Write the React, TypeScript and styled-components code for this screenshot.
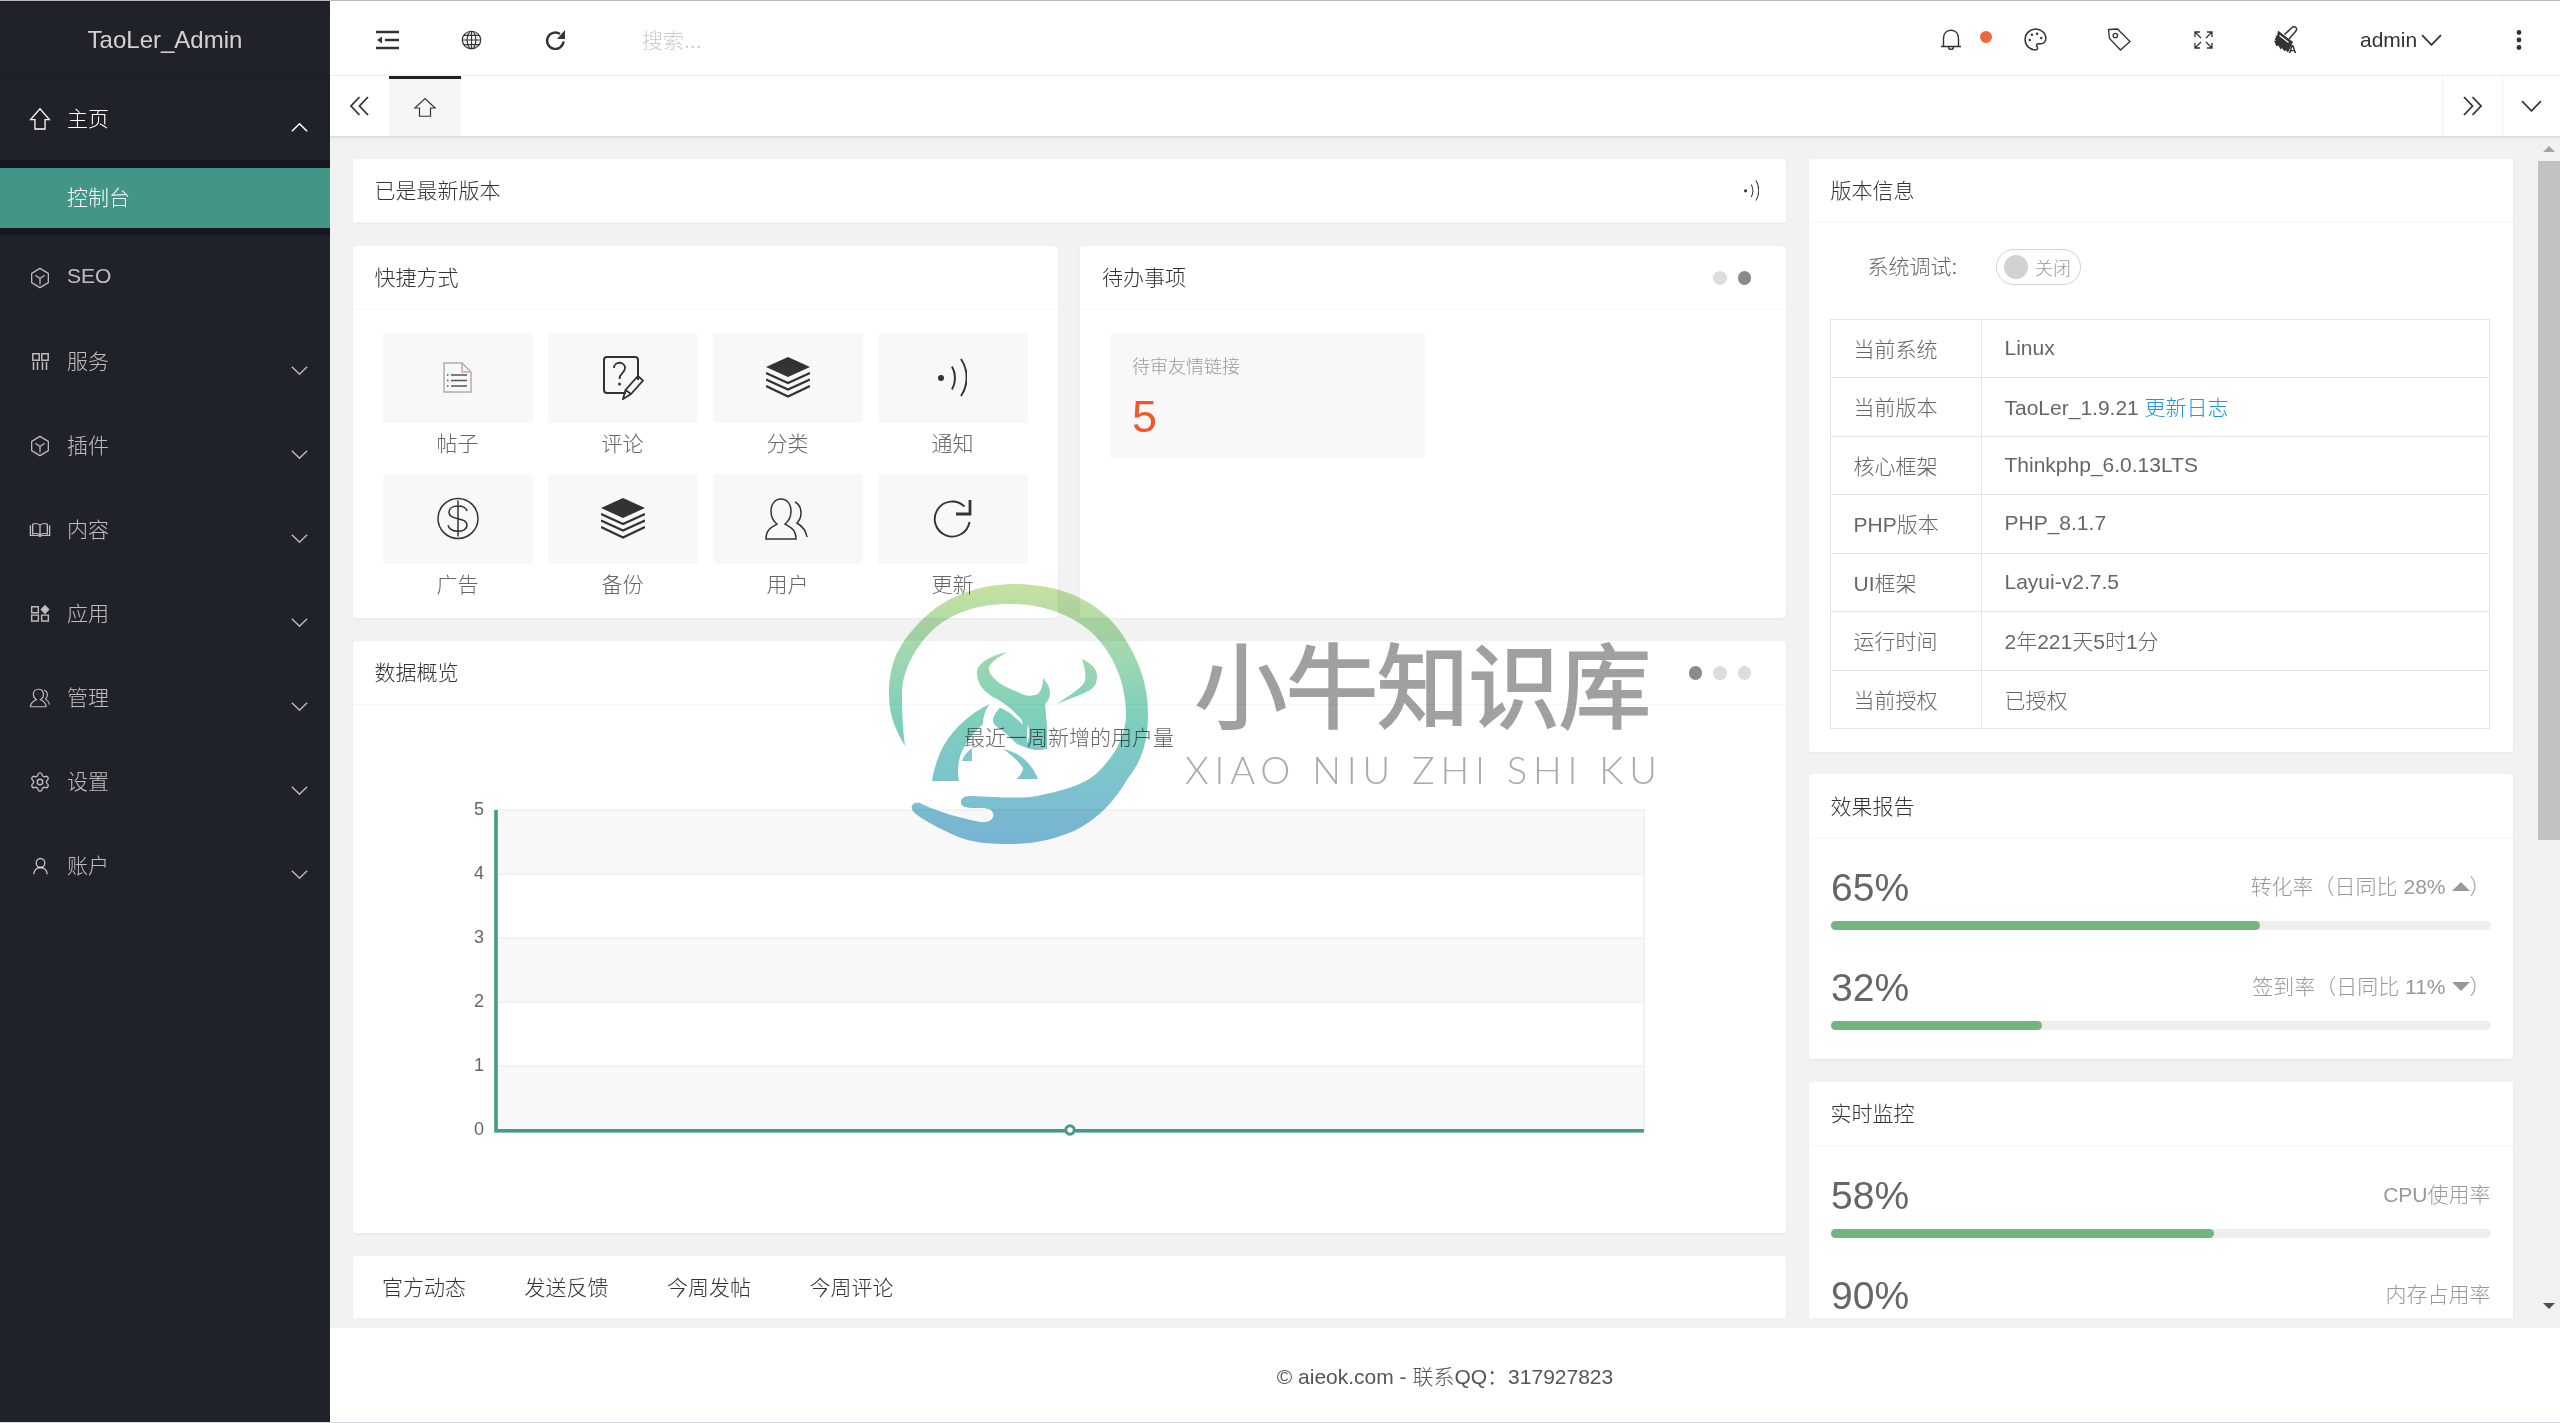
import React from "react";
import styled, { createGlobalStyle } from "styled-components";
import { Palette, Settings } from "lucide-react";

const Global = createGlobalStyle`
  html, body { margin: 0; padding: 0; height: 100%; overflow: hidden; background: #fff; }
  * { box-sizing: border-box; }
  #root { height: 100%; }
  body { font-family: "Liberation Sans", "Noto Sans CJK SC", sans-serif; font-size: 21px; font-weight: 300; color: #333; }
`;

const Page = styled.div`
  position: relative; display: flex; width: 2560px; height: 1423px; overflow: hidden;
  border-top: 1px solid #b9b9b9; border-bottom: 1px solid #cfdbe6;
`;

/* ---------- icons ---------- */
const Svg = styled.svg<{ $w: number; $h: number; $sw?: number }>`
  width: ${(p) => p.$w}px; height: ${(p) => p.$h}px; flex: none; display: block;
  fill: none; stroke: currentColor; stroke-width: ${(p) => p.$sw ?? 1.3};
`;
type IP = { w?: number; h?: number; sw?: number };
const I = (box: string, body: React.ReactNode, dw: number, dh: number, dsw?: number) =>
  ({ w = dw, h = dh, sw = dsw }: IP) => (
    <Svg viewBox={box} $w={w} $h={h} $sw={sw} preserveAspectRatio="none">{body}</Svg>
  );
const Fill = styled.path`fill: currentColor; stroke: none;`;
const Dot = styled.circle`fill: currentColor; stroke: none;`;

const HomeI = I("0 0 24 24", <path d="M12 1.800 1.800 12.600h4.700V22h11V12.600h4.700z" />, 22, 24, 1.4);
const CubeI = I("0 0 24 24", <><path d="M12 1.500 22 7v10l-10 5.500L2 17V7z" /><path d="M6.500 9 12 12.500 17.500 9M12 12.500V19" /></>, 20, 22, 1.5);
const AppI = I("0 0 17 17", <path d="M.8.800h6.400v6.400H.8zM9.800.800h6.400v6.400H9.800zM1.500 9v8M5.500 9v8M10.500 9v8M14.500 9v8" />, 17, 17, 1.5);
const BookI = I("0 0 24 24", <><path d="M1.500 6v14.500h8c1 0 2.500 1.500 2.500 1.500s1.500-1.500 2.500-1.500h8V6" /><path d="M4 18.500V4.500c3-1.500 6.500-1 8 1.500 1.500-2.500 5-3 8-1.500v14c-3-1.500-6.500-1-8 1.500-1.500-2.500-5-3-8-1.500zM12 6v13" /></>, 22, 17, 1.5);
const GridI = I("0 0 24 24", <><path d="M2 3.500h8v7.500H2zM2 14h8v7.500H2zM14 14h8v7.500h-8z" /><Fill d="M18 1l5.500 6-5.500 6-5.500-6z" /></>, 20, 19, 1.700);
const UsersI = I("0 0 24 24", <><path d="M1.500 22.500c0-5 3.500-7 6.500-8.500-2.200-1.500-3.200-3.800-3.200-6.300C4.800 4 7 1.500 10.300 1.500s5.500 2.500 5.500 6.200c0 2.500-1 4.800-3.200 6.300 3 1.500 6 3.500 6 8.500z" /><path d="M16.500 2.500c2.500 1.200 3.500 3.300 3.500 5.800 0 2-.8 3.700-2 4.700 2 1.500 4 4 4.500 7" /></>, 22, 20, 1.3);
const UserI = I("0 0 24 24", <><circle cx="12" cy="8" r="6" /><path d="M2.500 23c.5-5.500 4.500-9 9.500-9s9 3.500 9.500 9" /></>, 17, 18, 2);
const ChevD = I("0 0 20 11", <path d="M1 1l9 9 9-9" />, 17, 9, 1.700);
const ChevU = I("0 0 20 11", <path d="M1 10l9-9 9 9" />, 17, 9, 1.900);
const Dbl = ({ right }: { right?: boolean }) => (
  <Svg viewBox="0 0 21 20" $w={21} $h={20} $sw={1.8}>
    <path d={right ? "M2 1l8.500 9L2 19M10.500 1l8.500 9-8.500 9" : "M19 1l-8.500 9 8.500 9M10.500 1L2 10l8.500 9"} />
  </Svg>
);
const MenuI = I("0 0 23 20", <><path d="M0 2h23M9 10h14M0 18h23" /><Fill d="M1 10l5-3.500v7z" /></>, 23, 20, 2.400);
const GlobeI = I("0 0 24 24", <><circle cx="12" cy="12" r="10.500" /><ellipse cx="12" cy="12" rx="5" ry="10.500" /><path d="M12 1.500v21M1.500 12h21M3 6.500h18M3 17.500h18" /></>, 21, 20, 1.4);
const RefreshB = I("0 0 21 20", <><path d="M18.500 11.500a8.200 8.200 0 1 1-3.500-7.500" /><Fill d="M20 0v9h-8z" /></>, 21, 20, 2.500);
const BellI = I("0 0 22 21", <path d="M1 17.500h20M3.500 17.500v-8C3.500 4.500 6.500 1.200 11 1.200s7.500 3.300 7.500 8.300v8M8.500 18a2.500 2.500 0 0 0 5 0" />, 22, 21, 1.4);
const TagI = I("0 0 24 23", <><path d="M1.500 1.500l9-.5L23 13.500 13.500 22 2.500 10.500z" /><circle cx="8.300" cy="7.500" r="2.200" /></>, 24, 23, 1.3);
const FullI = I("0 0 19 18", <path d="M1 6V1h5M1 1l6 6M13 1h5v5M18 1l-6 6M1 12v5h5M1 17l6-6M13 17h5v-5M18 17l-6-6" />, 19, 18, 1.3);
const BrushText = styled.text`
  font-family: "Liberation Sans", sans-serif; font-size: 11px; font-weight: 700; fill: currentColor; stroke: none;
`;
const BrushI = () => (
  <Svg viewBox="0 0 40 40" $w={40} $h={40} $sw={1.500}>
    <Fill d="M11 10.500 26 22l-5 10.500-2.500-2.500-1 1.500-2.500-3.500-1.500 1.500-2-4-2 1L7 20.500l2 .5-1.500-2.500 1.500-.5-.5-2.500 1.500.5z" />
    <path d="M12.500 15.500l9 7" stroke="#fff" strokeWidth="1.200" />
    <path d="M17.500 14.500 25 7.500c1-1 3.500-1 4.300.5.800 1.500.2 2.500-.8 3.500L22 19" />
    <BrushText x="21.500" y="32.500">A</BrushText>
  </Svg>
);
const Kebab = () => (
  <Svg viewBox="0 0 6 20" $w={6} $h={20}>
    <Dot cx="3" cy="2.500" r="2.400" /><Dot cx="3" cy="10" r="2.400" /><Dot cx="3" cy="17.500" r="2.400" />
  </Svg>
);
const NoticeI = ({ w = 29, h = 39 }: IP) => (
  <Svg viewBox="0 0 29 39" $w={w} $h={h} $sw={2} preserveAspectRatio="none">
    <Dot cx="3" cy="20" r="3" /><path d="M14 8.500c4 7 4 16 0 23M23 1c7.500 11 7.500 26 0 37" />
  </Svg>
);
const DocI = I("0 0 29 31", <><path d="M1 1h18l9 9v20H1z" stroke="#aaa" /><path d="M19 1v9h9" stroke="#d8a08a" /><path d="M8 13h16M8 18.500h16M8 24h16M4 13h1.500M4 18.500h1.500M4 24h1.500" stroke="#555" /></>, 29, 31, 1.4);
const HelpI = I("0 0 42 44", <><path d="M24 37H5a3 3 0 0 1-3-3V4a3 3 0 0 1 3-3h28a3 3 0 0 1 3 3v20" strokeWidth="2" /><path d="M12 12c0-7 11-7 11 0 0 5-5.500 5-5.500 11" strokeWidth="1.800" /><Dot cx="17.500" cy="28" r="1.500" /><path d="M21 43l2.500-9L36 20l5 4.500L29 38zM23.500 34l5.500 4" strokeWidth="1.800" /></>, 42, 44, 2);
const LayersI = I("0 0 44 41", <><Fill d="M22 0l22 10-22 10L0 10z" /><path d="M0 16l22 10 22-10M0 22.500l22 10 22-10M0 29l22 10.500L44 29" /></>, 44, 41, 2.400);
const DollarI = I("0 0 42 43", <><circle cx="21" cy="21.500" r="20" /><path d="M30 14c-1-3.500-5-5-9-5-5 0-9 2.300-9 6.300 0 8.700 18 4 18 13 0 4-4.500 6-9 6-5 0-9-2-10-6M21 3.500v36" /></>, 42, 43, 1.5);
const PeopleI = I("0 0 45 42", <><path d="M1 41c0-10 6-12 11-15-4-3-6-8-6-13C6 6 10 1 16 1s10 5 10 12c0 5-2 10-6 13 5 3 11 5 11 15z" /><path d="M30 4c4 2 6 6 6 11 0 4-2 8-4 10 5 3 9 8 10 14" /></>, 45, 42, 1.5);
const RefreshT = I("0 0 39 39", <><path d="M36.500 23A17.500 17.500 0 1 1 31.500 7.500" /><path d="M37 1v14H23" strokeWidth="2.800" /></>, 39, 39, 1.900);

/* ---------- sidebar ---------- */
const Sidebar = styled.aside`
  width: 330px; flex: none; background: #20222a; color: rgba(255,255,255,.7);
`;
const Logo = styled.div`
  height: 75px; display: flex; align-items: center; justify-content: center; padding-top: 2px;
  font-size: 24px; color: rgba(255,255,255,.8); box-shadow: 0 1px 2px rgba(0,0,0,.2);
`;
const NavRow = styled.div<{ $open?: boolean }>`
  height: 84px; display: flex; align-items: center; padding: 0 22px 0 29px;
  color: ${(p) => (p.$open ? "#fff" : "rgba(255,255,255,.7)")};
`;
const NavIcon = styled.span`width: 22px; margin-right: 16px; display: flex; justify-content: center; align-items: center; margin-top: 1px;`;
const NavText = styled.span`margin-bottom: 2px;`;
const NavCaret = styled.span`margin-left: auto; margin-top: 18px; display: flex;`;
const SubMenu = styled.div`background: #16181e; padding: 8px 0 7px;`;
const SubItem = styled.div`
  height: 60px; line-height: 60px; padding-left: 67px; background: #429587; color: #fff;
`;
const navItems: [string, React.ReactNode][] = [
  ["SEO", <CubeI />], ["服务", <AppI />], ["插件", <CubeI />], ["内容", <BookI />],
  ["应用", <GridI />], ["管理", <UsersI />],
  ["设置", <Settings size={22} strokeWidth={1.5} />], ["账户", <UserI />],
];

/* ---------- top ---------- */
const Main = styled.div`flex: 1; min-width: 0; display: flex; flex-direction: column;`;
const Header = styled.header`
  height: 75px; flex: none; display: flex; align-items: center; padding-left: 15px; padding-top: 3px;
  background: #fff; border-bottom: 1px solid #f4f4f4; color: #333;
`;
const HeadItem = styled.div<{ $w?: number }>`
  width: ${(p) => p.$w ?? 84}px; height: 40px; flex: none; display: flex; align-items: center; justify-content: center;
  position: relative;
`;
const Search = styled.div`margin-left: 45px; margin-bottom: 2px; color: #ccc;`;
const HeadRight = styled.div`margin-left: auto; display: flex; align-items: center;`;
const RedDot = styled.span`
  position: absolute; left: 71px; top: 11px; width: 12px; height: 12px; border-radius: 50%; background: #f0653a;
`;
const Admin = styled.div`
  width: 148px; padding-left: 31px; display: flex; align-items: center; gap: 4px; color: #333;
`;
const TabBar = styled.div`
  height: 60px; flex: none; display: flex; align-items: stretch; background: #fff; position: relative; z-index: 1;
  box-shadow: 0 1px 3px rgba(0,0,0,.14); color: #333;
`;
const TabCtl = styled.div<{ $bordered?: boolean; $w?: number }>`
  width: ${(p) => p.$w ?? 60}px; flex: none; display: flex; align-items: center; justify-content: center;
  ${(p) => p.$bordered && "border-left: 1px solid #f2f2f2;"}
`;
const HomeTab = styled.div`
  width: 72px; background: #f6f6f6; border-top: 3px solid #20222a; display: flex; align-items: center; justify-content: center;
`;
const TabFill = styled.div`flex: 1;`;

/* ---------- body ---------- */
const BodyWrap = styled.div`flex: 1; min-height: 0; display: flex; flex-direction: column; background: #f2f2f2; padding-bottom: 9px;`;
const BodyInner = styled.div`flex: 1; min-height: 0; display: flex;`;
const Scroller = styled.div`flex: 1; min-width: 0; overflow: hidden; padding: 22.500px 0 0 22.500px;`;
const Columns = styled.div`display: grid; grid-template-columns: 1433.500px 704px; column-gap: 22.500px; align-items: start;`;
const Stack = styled.div`display: flex; flex-direction: column; gap: 22.500px;`;
const TwoUp = styled.div`display: grid; grid-template-columns: 705px 706px; column-gap: 22.500px;`;
const Card = styled.section`background: #fff; border-radius: 3px; box-shadow: 0 1px 3px rgba(0,0,0,.05);`;
const CardHead = styled.div`
  height: 64.500px; display: flex; align-items: center; justify-content: space-between;
  padding: 0 35px 2px 22px; border-bottom: 1.500px solid #f6f6f6; color: #333;
`;
const HeadNotice = styled.span`margin-right: -8px; margin-top: 2px; display: flex;`;
const Dots = styled.div`display: flex; gap: 11px; margin-top: 3px;`;
const CDot = styled.span<{ $on?: boolean }>`
  width: 13.500px; height: 13.500px; border-radius: 50%; background: ${(p) => (p.$on ? "#8a8a8a" : "#ddd")};
`;
const ShortGrid = styled.div`
  display: grid; grid-template-columns: repeat(4, 150px); gap: 16px 15px; padding: 22.500px 30px 18.500px;
`;
const Short = styled.div`display: flex; flex-direction: column; text-align: center; color: #666;`;
const Tile = styled.div`
  height: 90px; border-radius: 3px; background: #f8f8f8; color: #333; display: flex; align-items: center; justify-content: center;
`;
const ShortLabel = styled.div`height: 35px; line-height: 42px;`;
const Todo = styled.div`padding: 22.500px 30px; height: 308px;`;
const TodoBox = styled.div`width: 315px; height: 125px; background: #f8f8f8; padding: 21px 22px; border-radius: 3px;`;
const TodoLabel = styled.div`font-size: 18px; color: #999; line-height: 27px;`;
const TodoNum = styled.div`font-size: 45px; color: #f0572c; line-height: 60px; margin-top: 6px;`;
const ChartBody = styled.div`height: 528px;`;
const ChartSvg = styled.svg`display: block; width: 100%; height: 100%;`;
const ChartTitle = styled.text`font-size: 21px; fill: #666; text-anchor: middle; font-family: "Liberation Sans", "Noto Sans CJK SC", sans-serif; font-weight: 300;`;
const ChartTick = styled.text`font-size: 18px; fill: #666; text-anchor: end; font-family: "Liberation Sans", sans-serif;`;
const TabsRow = styled.div`display: flex; height: 64.500px; padding-left: 22px; gap: 43.500px; color: #333;`;
const NewsTab = styled.div<{ $on?: boolean }>`
  padding: 0 7.500px; line-height: 64px; height: 64.500px;
  border-bottom: 1.500px solid ${(p) => (p.$on ? "#74b57e" : "transparent")};
`;
const NewsBody = styled.div`height: 200px;`;

const SwitchRow = styled.div`display: flex; align-items: center; height: 45px; margin: -3px 0 31px 38px; color: #666;`;
const SwitchLabel = styled.div`width: 128px;`;
const Toggle = styled.div`
  width: 85px; height: 36px; margin-top: 4px; border: 1.500px solid #d2d2d2; border-radius: 30px; display: flex; align-items: center; padding-left: 7.500px; gap: 7px;
  font-size: 18px; color: #999;
`;
const Knob = styled.span`width: 24px; height: 24px; border-radius: 50%; background: #d2d2d2;`;
const InfoBody = styled.div`padding: 22.500px 22px 22.500px 21px;`;
const Table = styled.table`
  width: 660px; border-collapse: collapse; table-layout: fixed; color: #666;
  td { height: 58.500px; border: 1.500px solid #e6e6e6; padding: 0 23px 1px; }
  td:first-child { width: 151px; }
`;
const Link = styled.span`color: #1a94f0;`;
const StatBody = styled.div`padding: 21.500px 22px 29px 22.500px;`;
const StatRow = styled.div`
  display: flex; align-items: center; justify-content: space-between; height: 54px; margin-bottom: 7px; color: #999;
`;
const StatLabel = styled.div`margin-bottom: 4px;`;
const BigNum = styled.div`font-size: 39px; color: #666; line-height: 54px; padding-top: 2px;`;
const Bar = styled.div`height: 9px; background: #eee; border-radius: 20px; width: 660px; margin-bottom: 30px; &:last-child { margin-bottom: 0; }`;
const BarFill = styled.div`height: 100%; background: #74b57e; border-radius: 20px;`;
const Caret = styled.span<{ $down?: boolean }>`
  display: inline-block; width: 0; height: 0; margin-left: 6px; vertical-align: 3px;
  border-left: 9px solid transparent; border-right: 9px solid transparent;
  ${(p) => (p.$down ? "border-top: 9px solid #999;" : "border-bottom: 9px solid #999;")}
`;

const ScrollTrack = styled.div`width: 22px; flex: none; display: flex; flex-direction: column; align-items: center; background: #f1f1f1;`;
const ScrollBtn = styled.div`height: 25px; flex: none; display: flex; align-items: center; justify-content: center;`;
const Thumb = styled.div`width: 100%; height: 679px; background: #c1c1c1;`;
const ScrollGap = styled.div`flex: 1;`;
const Arrow = styled.span<{ $down?: boolean }>`
  width: 0; height: 0; border-left: 6px solid transparent; border-right: 6px solid transparent;
  ${(p) => (p.$down ? "border-top: 6px solid #505050;" : "border-bottom: 6px solid #a3a3a3;")}
`;
const Footer = styled.footer`
  height: 95px; flex: none; display: flex; align-items: center; justify-content: center; background: #fff; color: #555;
  border-top: 1px solid #eee;
`;

/* ---------- watermark ---------- */
const Watermark = styled.div`position: absolute; left: 880px; top: 574px; display: flex; pointer-events: none; mix-blend-mode: multiply;`;
const MarkLogo = styled.svg`width: 280px; height: 280px; display: block; flex: none;`;
const MarkText = styled.div`margin-left: 35px; padding-top: 46px; display: flex; flex-direction: column; align-items: flex-start;`;
const MarkCn = styled.div`
  font-family: "Noto Sans CJK SC", sans-serif; font-size: 92px; line-height: 120px; letter-spacing: -1px; font-weight: 400; color: #a0a0a0;
  -webkit-text-stroke: 2px #a0a0a0; paint-order: stroke;
`;
const MarkEn = styled.div`
  font-family: "Lato", sans-serif; font-size: 38px; line-height: 44px; letter-spacing: 5.800px; font-weight: 300; color: #aaa; margin-top: 6px; margin-left: -10px; white-space: nowrap;
`;

const LogoMark = () => (
  <MarkLogo viewBox="880 574 280 280">
    <defs>
      <linearGradient id="ox" x1="0" y1="583" x2="0" y2="843" gradientUnits="userSpaceOnUse">
        <stop offset="0" stopColor="#c7e1a0" />
        <stop offset=".5" stopColor="#7ed0bb" />
        <stop offset="1" stopColor="#7bb8dc" />
      </linearGradient>
    </defs>
    <g fill="url(#ox)">
      <path d="M905 745C893 725 889 710 889 693C889 660 900 640 924 617C950 592 985 583 1015 583C1060 583 1100 600 1122 633C1140 660 1148 685 1148 713C1148 740 1142 760 1128 777C1115 800 1098 818 1074 830C1050 840 1030 843 1010 843C990 843 972 842 956 835C940 828 925 820 916 813C908 807 912 800 920 802C932 808 950 815 980 821C990 822 995 817 993 812C991 807 985 807 975 807C965 807 960 805 961 800C962 796 965 795 972 795C995 796 1020 798 1037 795C1060 790 1082 785 1096 773C1115 755 1126 735 1126 713C1126 680 1112 650 1090 630C1068 612 1040 603 1010 603C980 603 955 610 935 627C915 645 902 670 902 693C902 715 903 730 905 745Z" />
      <path d="M1007 651C990 655 977 662 977 672C977 684 985 692 997 698C1008 704 1020 712 1028 723C1030 732 1029 738 1027 742L1003 730C998 726 993 724 993 720C994 714 997 710 1000 707C1006 709 1012 713 1018 720C1022 724 1025 727 1027 730L1028 723C1022 715 1012 700 997 698L997 698C1006 703 1014 710 1022 719L1027 747C1034 750 1041 749 1047 748L1047 725L1045 703C1051 697 1053 688 1043 677C1043 685 1041 690 1038 693C1030 696 1025 695 1020 692C1010 688 1003 685 997 680C990 674 987 668 990 664C995 658 1001 655 1007 651Z" />
      <path d="M1000 707C996 711 993 716 993 720C996 726 1001 728 1003 730C1010 736 1014 740 1017 743L1027 747L1027 728C1022 722 1018 719 1013 715C1009 711 1004 709 1000 707Z" />
      <path d="M1082 658C1090 662 1097 667 1097 675C1097 682 1095 686 1090 689C1082 694 1068 698 1057 703C1066 696 1078 690 1084 682C1087 676 1085 668 1082 658Z" />
      <path d="M990 703C970 712 950 730 940 752C935 765 933 772 932 780L959 780C957 770 958 760 962 750C968 738 975 730 983 723C983 716 985 709 990 703Z" />
      <path d="M972 747C966 752 963 756 962 760L972 760Z" />
      <path d="M1003 748C1012 750 1018 753 1023 757C1030 763 1035 770 1038 778L1017 778C1020 774 1023 771 1023 767C1020 762 1012 754 1003 748Z" />
    </g>
  </MarkLogo>
);

const Stat = ({ num, pct, label }: { num: string; pct: number; label: React.ReactNode }) => (
  <>
    <StatRow><BigNum>{num}</BigNum><StatLabel>{label}</StatLabel></StatRow>
    <Bar><BarFill style={{ width: `${pct}%` }} /></Bar>
  </>
);

const shortcuts: [string, React.ReactNode][] = [
  ["帖子", <DocI />], ["评论", <HelpI />], ["分类", <LayersI />], ["通知", <NoticeI />],
  ["广告", <DollarI />], ["备份", <LayersI />], ["用户", <PeopleI />], ["更新", <RefreshT />],
];
const infoRows: [string, React.ReactNode][] = [
  ["当前系统", "Linux"],
  ["当前版本", <>TaoLer_1.9.21 <Link>更新日志</Link></>],
  ["核心框架", "Thinkphp_6.0.13LTS"],
  ["PHP版本", "PHP_8.1.7"],
  ["UI框架", "Layui-v2.7.5"],
  ["运行时间", "2年221天5时1分"],
  ["当前授权", "已授权"],
];

export default function App() {
  return (
    <Page>
      <Global />
      <Sidebar>
        <Logo>TaoLer_Admin</Logo>
        <NavRow $open>
          <NavIcon><HomeI /></NavIcon><NavText>主页</NavText>
          <NavCaret><ChevU /></NavCaret>
        </NavRow>
        <SubMenu><SubItem>控制台</SubItem></SubMenu>
        {navItems.map(([name, icon]) => (
          <NavRow key={name}>
            <NavIcon>{icon}</NavIcon><NavText>{name}</NavText>
            {name !== "SEO" && <NavCaret><ChevD /></NavCaret>}
          </NavRow>
        ))}
      </Sidebar>
      <Main>
        <Header>
          <HeadItem><MenuI /></HeadItem>
          <HeadItem><GlobeI /></HeadItem>
          <HeadItem><RefreshB /></HeadItem>
          <Search>搜索...</Search>
          <HeadRight>
            <HeadItem><BellI /><RedDot /></HeadItem>
            <HeadItem><Palette size={25} strokeWidth={1.4} /></HeadItem>
            <HeadItem><TagI /></HeadItem>
            <HeadItem><FullI /></HeadItem>
            <HeadItem><BrushI /></HeadItem>
            <Admin>admin<ChevD w={21} h={12} sw={1.6} /></Admin>
            <HeadItem $w={83}><Kebab /></HeadItem>
          </HeadRight>
        </Header>
        <TabBar>
          <TabCtl $w={59}><Dbl /></TabCtl>
          <HomeTab><HomeI w={24} h={21} sw={1.2} /></HomeTab>
          <TabFill />
          <TabCtl $bordered><Dbl right /></TabCtl>
          <TabCtl $bordered $w={58}><ChevD w={21} h={12} sw={1.5} /></TabCtl>
        </TabBar>
        <BodyWrap>
          <BodyInner>
            <Scroller>
              <Columns>
                <Stack>
                  <Card>
                    <CardHead>已是最新版本<HeadNotice><NoticeI w={15} h={21} /></HeadNotice></CardHead>
                  </Card>
                  <TwoUp>
                    <Card>
                      <CardHead>快捷方式</CardHead>
                      <ShortGrid>
                        {shortcuts.map(([label, icon]) => (
                          <Short key={label}>
                            <Tile>{icon}</Tile>
                            <ShortLabel>{label}</ShortLabel>
                          </Short>
                        ))}
                      </ShortGrid>
                    </Card>
                    <Card>
                      <CardHead>待办事项<Dots><CDot /><CDot $on /></Dots></CardHead>
                      <Todo>
                        <TodoBox>
                          <TodoLabel>待审友情链接</TodoLabel>
                          <TodoNum>5</TodoNum>
                        </TodoBox>
                      </Todo>
                    </Card>
                  </TwoUp>
                  <Card>
                    <CardHead>数据概览<Dots><CDot $on /><CDot /><CDot /></Dots></CardHead>
                    <ChartBody>
                      <ChartSvg viewBox="0 0 1433.500 528">
                        <ChartTitle x="716" y="40">最近一周新增的用户量</ChartTitle>
                        <rect x="142" y="105" width="1149" height="64" fill="#f8f8f8" />
                        <rect x="142" y="233" width="1149" height="64" fill="#f8f8f8" />
                        <rect x="142" y="361" width="1149" height="64" fill="#f8f8f8" />
                        <path d="M142 105H1291V425M142 169H1291M142 233H1291M142 297H1291M142 361H1291" stroke="#eee" strokeWidth="1.500" fill="none" />
                        {[5, 4, 3, 2, 1, 0].map((n, i) => (
                          <ChartTick key={n} x="131" y={109.500 + i * 64}>{n}</ChartTick>
                        ))}
                        <path d="M143 105V426H1291" stroke="#8cc1b6" strokeWidth="4" fill="none" />
                        <path d="M143 105V425.500H1291" stroke="#469a8b" strokeWidth="3" fill="none" />
                        <circle cx="717" cy="425" r="4.200" fill="#fff" stroke="#469a8b" strokeWidth="3" />
                      </ChartSvg>
                    </ChartBody>
                  </Card>
                  <Card>
                    <TabsRow>
                      <NewsTab $on>官方动态</NewsTab>
                      <NewsTab>发送反馈</NewsTab>
                      <NewsTab>今周发帖</NewsTab>
                      <NewsTab>今周评论</NewsTab>
                    </TabsRow>
                    <NewsBody />
                  </Card>
                </Stack>
                <Stack>
                  <Card>
                    <CardHead>版本信息</CardHead>
                    <InfoBody>
                      <SwitchRow>
                        <SwitchLabel>系统调试:</SwitchLabel>
                        <Toggle><Knob />关闭</Toggle>
                      </SwitchRow>
                      <Table>
                        <tbody>
                          {infoRows.map(([k, v]) => (
                            <tr key={k}><td>{k}</td><td>{v}</td></tr>
                          ))}
                        </tbody>
                      </Table>
                    </InfoBody>
                  </Card>
                  <Card>
                    <CardHead>效果报告</CardHead>
                    <StatBody>
                      <Stat num="65%" pct={65} label={<>转化率（日同比 28%<Caret />）</>} />
                      <Stat num="32%" pct={32} label={<>签到率（日同比 11%<Caret $down />）</>} />
                    </StatBody>
                  </Card>
                  <Card>
                    <CardHead>实时监控</CardHead>
                    <StatBody>
                      <Stat num="58%" pct={58} label="CPU使用率" />
                      <Stat num="90%" pct={90} label="内存占用率" />
                    </StatBody>
                  </Card>
                </Stack>
              </Columns>
            </Scroller>
            <ScrollTrack>
              <ScrollBtn><Arrow /></ScrollBtn>
              <Thumb />
              <ScrollGap />
              <ScrollBtn><Arrow $down /></ScrollBtn>
            </ScrollTrack>
          </BodyInner>
        </BodyWrap>
        <Footer>© aieok.com - 联系QQ：317927823</Footer>
      </Main>
      <Watermark>
        <LogoMark />
        <MarkText>
          <MarkCn>小牛知识库</MarkCn>
          <MarkEn>XIAO NIU ZHI SHI KU</MarkEn>
        </MarkText>
      </Watermark>
    </Page>
  );
}
